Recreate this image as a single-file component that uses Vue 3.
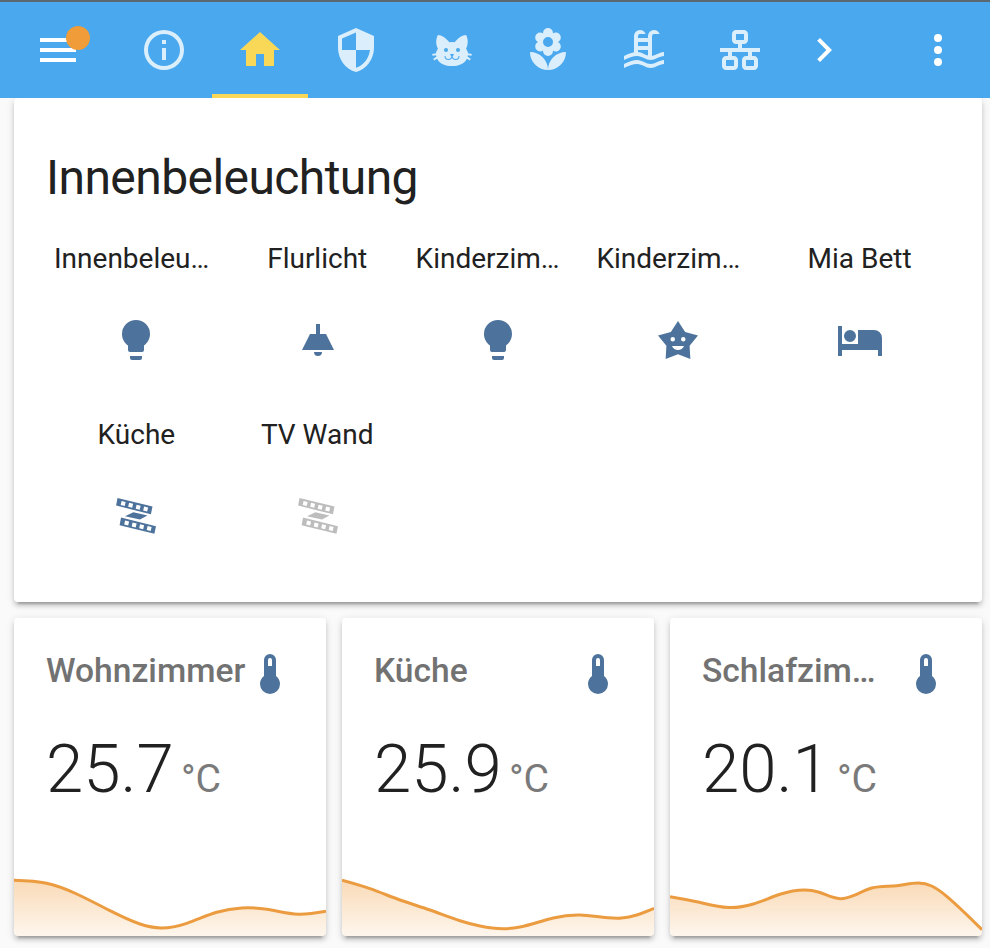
<script setup>
const icons = {
  menu: 'M3,6H21V8H3V6M3,11H21V13H3V11M3,16H21V18H3V16Z',
  info: 'M11,9H13V7H11M12,20C7.59,20 4,16.41 4,12C4,7.59 7.59,4 12,4C16.41,4 20,7.59 20,12C20,16.41 16.41,20 12,20M12,2A10,10 0 0,0 2,12A10,10 0 0,0 12,22A10,10 0 0,0 22,12A10,10 0 0,0 12,2M11,17H13V11H11V17Z',
  home: 'M10,20V14H14V20H19V12H22L12,3L2,12H5V20H10Z',
  security: 'M12,12H19C18.47,16.11 15.72,19.78 12,20.92V12H5V6.3L12,3.19M12,1L3,5V11C3,16.55 6.84,21.73 12,23C17.16,21.73 21,16.55 21,11V5L12,1Z',
  cat: 'M12,8L10.67,8.09C9.81,7.07 7.4,4.5 5,4.5C5,4.5 3.03,7.46 4.96,11.41C4.41,12.24 4.07,12.67 4,13.66L2.07,13.95L2.28,14.93L4.04,14.67L4.18,15.38L2.61,16.32L3.08,17.21L4.53,16.32C5.68,18.76 8.59,20 12,20C15.41,20 18.32,18.76 19.47,16.32L20.92,17.21L21.39,16.32L19.82,15.38L19.96,14.67L21.72,14.93L21.93,13.95L20,13.66C19.93,12.67 19.59,12.24 19.04,11.41C20.97,7.46 19,4.5 19,4.5C16.6,4.5 14.19,7.07 13.33,8.09L12,8M9,11A1,1 0 0,1 10,12A1,1 0 0,1 9,13A1,1 0 0,1 8,12A1,1 0 0,1 9,11M15,11A1,1 0 0,1 16,12A1,1 0 0,1 15,13A1,1 0 0,1 14,12A1,1 0 0,1 15,11M11,14H13L12.3,15.39C12.5,16.03 13.06,16.5 13.75,16.5A1.5,1.5 0 0,0 15.25,15H15.75A2,2 0 0,1 13.75,17C13,17 12.35,16.59 12,16V16H12C11.65,16.59 11,17 10.25,17A2,2 0 0,1 8.25,15H8.75A1.5,1.5 0 0,0 10.25,16.5C10.94,16.5 11.5,16.03 11.7,15.39L11,14Z',
  flower: 'M3,13A9,9 0 0,0 12,22C12,17 7.97,13 3,13M12,5.5A2.5,2.5 0 0,1 14.5,8A2.5,2.5 0 0,1 12,10.5A2.5,2.5 0 0,1 9.5,8A2.5,2.5 0 0,1 12,5.5M5.6,10.25A2.5,2.5 0 0,0 8.1,12.75C8.63,12.75 9.12,12.58 9.5,12.31C9.5,12.37 9.5,12.43 9.5,12.5A2.5,2.5 0 0,0 12,15A2.5,2.5 0 0,0 14.5,12.5C14.5,12.43 14.5,12.37 14.5,12.31C14.88,12.58 15.37,12.75 15.9,12.75C17.28,12.75 18.4,11.63 18.4,10.25C18.4,9.25 17.81,8.4 16.97,8C17.81,7.6 18.4,6.74 18.4,5.75C18.4,4.37 17.28,3.25 15.9,3.25C15.37,3.25 14.88,3.41 14.5,3.69C14.5,3.63 14.5,3.56 14.5,3.5A2.5,2.5 0 0,0 12,1A2.5,2.5 0 0,0 9.5,3.5C9.5,3.56 9.5,3.63 9.5,3.69C9.12,3.41 8.63,3.25 8.1,3.25A2.5,2.5 0 0,0 5.6,5.75C5.6,6.74 6.19,7.6 7.03,8C6.19,8.4 5.6,9.25 5.6,10.25M12,22A9,9 0 0,0 21,13C16,13 12,17 12,22Z',
  pool: 'M2,15C3.67,14.25 5.33,13.5 7,13.17V5A3,3 0 0,1 10,2C11.31,2 12.42,2.83 12.83,4H10A1,1 0 0,0 9,5V6H14V5A3,3 0 0,1 17,2C18.31,2 19.42,2.83 19.83,4H17A1,1 0 0,0 16,5V14.94C18,14.62 20,13 22,13V15C19.78,15 17.56,17 15.33,17C13.11,17 10.89,15 8.67,15C6.44,15 4.22,16 2,17V15M14,8H9V10H14V8M14,12H9V13C10.67,13.16 12.33,14.31 14,14.79V12M2,19C4.22,18 6.44,17 8.67,17C10.89,17 13.11,19 15.33,19C17.56,19 19.78,17 22,17V19C19.78,19 17.56,21 15.33,21C13.11,21 10.89,19 8.67,19C6.44,19 4.22,20 2,21V19Z',
  lan: 'M10,2C8.89,2 8,2.89 8,4V7C8,8.11 8.89,9 10,9H11V11H2V13H6V15H5C3.89,15 3,15.89 3,17V20C3,21.11 3.89,22 5,22H9C10.11,22 11,21.11 11,20V17C11,15.89 10.11,15 9,15H8V13H16V15H15C13.89,15 13,15.89 13,17V20C13,21.11 13.89,22 15,22H19C20.11,22 21,21.11 21,20V17C21,15.89 20.11,15 19,15H18V13H22V11H13V9H14C15.11,9 16,8.11 16,7V4C16,2.89 15.11,2 14,2H10M10,4H14V7H10V4M5,17H9V20H5V17M15,17H19V20H15V17Z',
  chevron: 'M8.59,16.59L13.17,12L8.59,7.41L10,6L16,12L10,18L8.59,16.59Z',
  dots: 'M12,16A2,2 0 0,1 14,18A2,2 0 0,1 12,20A2,2 0 0,1 10,18A2,2 0 0,1 12,16M12,10A2,2 0 0,1 14,12A2,2 0 0,1 12,14A2,2 0 0,1 10,12A2,2 0 0,1 12,10M12,4A2,2 0 0,1 14,6A2,2 0 0,1 12,8A2,2 0 0,1 10,6A2,2 0 0,1 12,4Z',
  bulb: 'M12,2A7,7 0 0,0 5,9C5,11.38 6.19,13.47 8,14.74V17A1,1 0 0,0 9,18H15A1,1 0 0,0 16,17V14.74C17.81,13.47 19,11.38 19,9A7,7 0 0,0 12,2M9,21A1,1 0 0,0 10,22H14A1,1 0 0,0 15,21V20H9V21Z',
  ceiling: 'M8,9H11V4H13V9H16L20,17H4L8,9M14,18A2,2 0 0,1 12,20A2,2 0 0,1 10,18H14Z',
  star: 'M12,2.5L8.42,8.06L2,9.74L6.2,14.88L5.82,21.5L12,19.09L18.18,21.5L17.8,14.88L22,9.74L15.58,8.06L12,2.5M9.38,10.5A1.12,1.12 0 0,1 9.38,12.75A1.12,1.12 0 0,1 9.38,10.5M14.63,10.5A1.12,1.12 0 0,1 14.63,12.75A1.12,1.12 0 0,1 14.63,10.5M9,15H15C14.5,16.21 13.31,17 12,17C10.69,17 9.5,16.21 9,15Z',
  bed: 'M19,7H11V14H3V5H1V20H3V17H21V20H23V11A4,4 0 0,0 19,7M7,13A3,3 0 0,0 10,10A3,3 0 0,0 7,7A3,3 0 0,0 4,10A3,3 0 0,0 7,13Z',
  strip: ledStrip(),
  thermometer: 'M17,17A5,5 0 0,1 12,22A5,5 0 0,1 7,17C7,15.36 7.79,13.91 9,13V5A3,3 0 0,1 12,2A3,3 0 0,1 15,5V13C16.21,13.91 17,15.36 17,17M12,4A1,1 0 0,0 11,5V8H13V5A1,1 0 0,0 12,4Z',
}

// Two slanted bands with four LEDs each, joined by a folded piece
function ledStrip() {
  const band = (x, y) => {
    let d = `M${x},${y}l17.5,4.3l-0.8,3.8l-17.4,-4.3z`
    for (let i = 0; i < 4; i++) {
      d += `M${x + 2.05 + i * 3.75},${y + 1.5 + i * 0.92}l2,0.49l-0.46,2l-2,-0.49z`
    }
    return d
  }
  return band(2.75, 3) + 'M10.7,10.1L17.7,11.8L14,13.8L6.5,12.1Z' + band(4.5, 12.8)
}

const tabs = ['info', 'home', 'security', 'cat', 'flower', 'pool', 'lan']

const lights = [
  { name: 'Innenbeleu…', icon: 'bulb', clipped: true },
  { name: 'Flurlicht', icon: 'ceiling' },
  { name: 'Kinderzim…', icon: 'bulb', clipped: true },
  { name: 'Kinderzim…', icon: 'star', clipped: true },
  { name: 'Mia Bett', icon: 'bed' },
  { name: 'Küche', icon: 'strip' },
  { name: 'TV Wand', icon: 'strip', off: true },
]

const sensors = [
  {
    name: 'Wohnzimmer',
    value: '25.7',
    points: [[0, 20.3], [32.7, 23.3], [62.7, 34], [96, 50.7], [126, 64], [147, 68], [172.7, 63.3], [202.7, 52.3], [227.7, 48], [252.7, 49.3], [284.3, 54.3], [312, 51.3]],
  },
  {
    name: 'Küche',
    value: '25.9',
    points: [[0, 20.3], [28, 28.7], [58, 40], [88, 50], [118, 60.7], [138, 66], [161.3, 68.7], [178, 67], [211.3, 58], [238, 55], [279.7, 58], [294.7, 55], [312, 48.3]],
  },
  {
    name: 'Schlafzim…',
    value: '20.1',
    points: [[0, 36.7], [26.7, 41.7], [58.3, 47.5], [83.3, 44], [110, 34.3], [135, 30], [148.3, 32], [170, 38.7], [183.3, 35.7], [201.7, 28], [226.7, 25.7], [248.3, 23], [261.7, 26], [276.7, 36.3], [312, 69.7]],
  },
]

// Tangents of the natural cubic spline, by a tridiagonal solve
function tangents(p) {
  const n = p.length
  const h = (i) => p[i + 1][0] - p[i][0]
  const s = (i) => (p[i + 1][1] - p[i][1]) / h(i)
  const c = [0.5]
  const r = [1.5 * s(0)]
  for (let i = 1; i < n; i++) {
    const last = i === n - 1
    const lower = last ? 1 : h(i)
    const diag = last ? 2 : 2 * (h(i - 1) + h(i))
    const upper = last ? 0 : h(i - 1)
    const rhs = last ? 3 * s(i - 1) : 3 * (h(i) * s(i - 1) + h(i - 1) * s(i))
    const m = diag - lower * c[i - 1]
    c.push(upper / m)
    r.push((rhs - lower * r[i - 1]) / m)
  }
  for (let i = n - 2; i >= 0; i--) r[i] -= c[i] * r[i + 1]
  return r
}

function line(p) {
  const t = tangents(p)
  let d = `M${p[0]}`
  for (let i = 0; i < p.length - 1; i++) {
    const [x0, y0] = p[i]
    const [x1, y1] = p[i + 1]
    const h = (x1 - x0) / 3
    d += `C${x0 + h},${y0 + t[i] * h} ${x1 - h},${y1 - t[i + 1] * h} ${x1},${y1}`
  }
  return d
}
</script>

<template>
  <div class="page">
    <header class="toolbar">
      <button class="menu">
        <svg class="icon" viewBox="0 0 24 24"><path :d="icons.menu" /></svg>
        <span class="badge"></span>
      </button>
      <nav class="tabs">
        <a v-for="t in tabs" :key="t" class="tab" :class="{ active: t === 'home' }">
          <svg class="icon" viewBox="0 0 24 24"><path fill-rule="evenodd" :d="icons[t]" /></svg>
        </a>
      </nav>
      <svg class="icon next" viewBox="0 0 24 24"><path :d="icons.chevron" /></svg>
      <svg class="icon more" viewBox="0 0 24 24"><path :d="icons.dots" /></svg>
    </header>

    <main class="content">
      <section class="card glance">
        <h1>Innenbeleuchtung</h1>
        <div class="entities">
          <div v-for="(l, i) in lights" :key="i" class="entity" :class="{ off: l.off }">
            <div class="name" :class="{ clipped: l.clipped }">{{ l.name }}</div>
            <svg class="icon" viewBox="0 0 24 24"><path fill-rule="evenodd" :d="icons[l.icon]" /></svg>
          </div>
        </div>
      </section>

      <div class="sensors">
        <section v-for="(s, i) in sensors" :key="s.name" class="card sensor">
          <div class="head">
            <h2>{{ s.name }}</h2>
            <svg class="icon" viewBox="0 0 24 24"><path fill-rule="evenodd" :d="icons.thermometer" /></svg>
          </div>
          <div class="state">
            <span class="value">{{ s.value }}</span>
            <span class="unit">°C</span>
          </div>
          <svg class="graph" viewBox="0 0 312 76">
            <defs>
              <linearGradient :id="'fade' + i" x1="0" y1="0" x2="0" y2="1">
                <stop offset="0" stop-color="#f09a38" stop-opacity="0.36" />
                <stop offset="1" stop-color="#f09a38" stop-opacity="0.09" />
              </linearGradient>
            </defs>
            <path :d="line(s.points) + 'V76H0Z'" :fill="`url(#fade${i})`" />
            <path class="stroke" :d="line(s.points)" />
          </svg>
        </section>
      </div>
    </main>
  </div>
</template>

<style>
body {
  background: #fafafa;
}
</style>

<style scoped>
.page {
  height: 948px;
  overflow: hidden;
  font-family: Roboto, "Liberation Sans", sans-serif;
  color: #212121;
}
.icon {
  display: block;
  flex: none;
  width: 48px;
  height: 48px;
  fill: currentColor;
}
.toolbar {
  position: relative;
  z-index: 1;
  box-sizing: border-box;
  height: 98px;
  padding: 0 28px 0 34px;
  border-top: 2px solid #5c6770;
  background: #49a8ee;
  color: #fff;
  display: flex;
  align-items: center;
}
.menu {
  position: relative;
  width: 82px;
  padding: 0;
  border: 0;
  background: none;
  color: inherit;
}
.badge {
  position: absolute;
  top: 0;
  left: 32px;
  width: 24px;
  height: 24px;
  border-radius: 50%;
  background: #f09c38;
}
.tabs {
  display: flex;
  height: 96px;
}
.tab {
  box-sizing: border-box;
  width: 96px;
  padding: 24px;
  color: #dbeefc;
}
.tab.active {
  color: #f8d856;
  border-bottom: 4px solid #f8d856;
}
.next {
  margin-left: 12px;
}
.more {
  margin-left: auto;
}
.content {
  padding: 0 8px 0 14px;
}
.card {
  box-sizing: border-box;
  background: #fff;
  border-radius: 4px;
  box-shadow: 0 4px 4px rgba(0, 0, 0, 0.14), 0 2px 10px rgba(0, 0, 0, 0.12), 0 6px 2px -4px rgba(0, 0, 0, 0.2);
}
.glance {
  height: 504px;
  padding: 56px 32px 0;
}
h1 {
  margin: 0;
  font-size: 48px;
  line-height: 48px;
  font-weight: 400;
  letter-spacing: -0.012em;
}
.entities {
  display: grid;
  grid-template-columns: repeat(5, 1fr);
  row-gap: 51px;
  margin-top: 37px;
}
.entity {
  display: flex;
  flex-direction: column;
  align-items: center;
  gap: 37px;
}
.name {
  font-size: 28px;
  line-height: 40px;
  white-space: nowrap;
}
.name.clipped {
  width: 164.8px;
}
.entity:nth-child(5n + 2) .icon {
  margin-left: 1.6px;
}
.entity:nth-child(5n + 4) .icon {
  margin-right: 1.6px;
}
.entity .icon,
.head .icon {
  color: #4d739c;
}
.entity.off .icon {
  color: #bdbdbd;
}
.sensors {
  display: grid;
  grid-template-columns: repeat(3, 312px);
  gap: 16px;
  margin-top: 16px;
}
.sensor {
  height: 318px;
  padding-top: 32px;
  display: flex;
  flex-direction: column;
  overflow: hidden;
}
.head {
  display: flex;
  justify-content: space-between;
  padding: 0 32px;
}
h2 {
  margin: 0;
  font-size: 33.6px;
  line-height: 42px;
  font-weight: 500;
  color: #727272;
  white-space: nowrap;
}
.state {
  display: flex;
  align-items: baseline;
  gap: 7px;
  margin-top: 37px;
  padding-left: 32px;
}
.value {
  font-size: 67.2px;
  line-height: 68px;
  font-weight: 300;
}
.unit {
  font-size: 39.2px;
  line-height: 40px;
  color: #7a7a7a;
}
.graph {
  display: block;
  width: 312px;
  height: 76px;
  margin-top: auto;
}
.stroke {
  fill: none;
  stroke: #ec9c40;
  stroke-width: 3;
}
</style>
